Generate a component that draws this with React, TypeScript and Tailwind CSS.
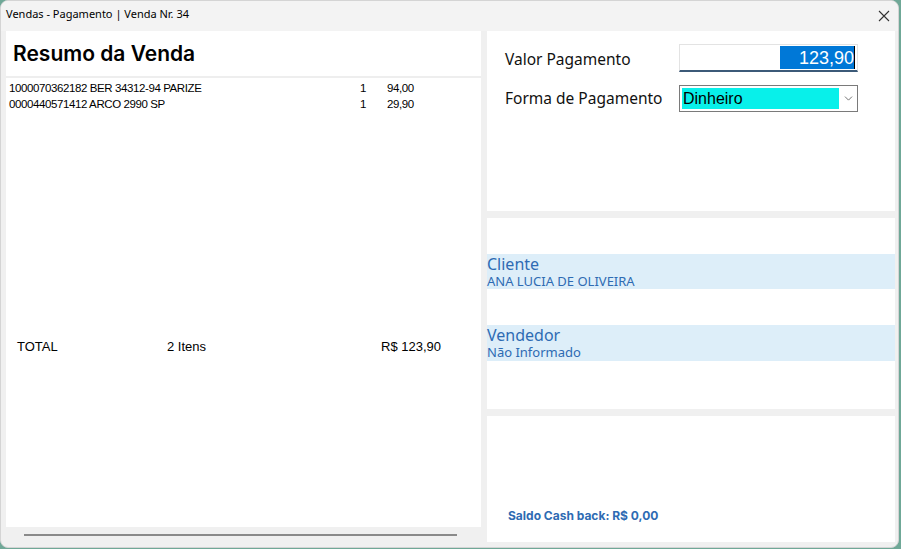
import { ChevronDown } from "lucide-react";

const items = [
  { desc: "1000070362182 BER 34312-94 PARIZE", qty: "1", price: "94,00" },
  { desc: "0000440571412 ARCO 2990 SP", qty: "1", price: "29,90" },
];

const ui = { fontFamily: '"Noto Sans", "Open Sans", sans-serif' };
const arial = { fontFamily: '"Liberation Sans", Arial, sans-serif' };

export default function App() {
  return (
    <div className="w-[901px] h-[549px] bg-[#6fa897] overflow-hidden">
      <div className="w-[899px] h-[548px] rounded-lg bg-[#f0f0f0] border border-[#d4d4d4] flex flex-col overflow-hidden">
        {/* Title bar */}
        <div className="h-[30px] shrink-0 flex items-center justify-between pl-[5px] pr-[8px] pb-[3px] bg-[#f3f3f3]" style={ui}>
          <span className="text-[11px] text-black">Vendas - Pagamento | Venda Nr. 34</span>
          <svg width="12" height="12" viewBox="0 0 12 12" className="text-[#333] mt-[2px]">
            <path d="M1 1 L11 11 M11 1 L1 11" stroke="currentColor" strokeWidth="1.1" />
          </svg>
        </div>

        <div className="flex flex-1 pl-[5px] gap-[6px] pb-[5px]">
          {/* Left: resumo */}
          <div className="w-[475px] flex flex-col">
            <div className="flex-1 bg-white flex flex-col">
              <div className="h-[47px] border-b-2 border-[#eeeeee] flex items-center pl-[7px]">
                <h1 className="text-[21px] font-semibold text-black" style={{ fontFamily: '"Inter", "Liberation Sans", sans-serif' }}>
                  Resumo da Venda
                </h1>
              </div>
              <div className="pt-[3px] pl-[3px] text-[11.5px] tracking-[-0.4px] text-black" style={arial}>
                {items.map((it) => (
                  <div key={it.desc} className="h-[16px] flex items-center">
                    <span className="w-[351px]">{it.desc}</span>
                    <span className="w-[27px]">{it.qty}</span>
                    <span>{it.price}</span>
                  </div>
                ))}
              </div>
              <div className="mt-[226px] pl-[11px] h-[16px] flex items-center text-[13px] text-black" style={arial}>
                <span className="w-[150px]">TOTAL</span>
                <span className="w-[214px]">2 Itens</span>
                <span>R$ 123,90</span>
              </div>
            </div>
            <div className="h-[15px] flex items-center pl-[18px]">
              <div className="w-[433px] h-[2px] bg-[#8a8a8a]" />
            </div>
          </div>

          {/* Right column */}
          <div className="w-[408px] flex flex-col gap-[7px]">
            <div className="h-[180px] bg-white pt-[13px] pl-[18px]">
              <div className="flex items-center h-[28px]">
                <span className="w-[174px] pt-[4px] text-[15.5px] text-[#111]" style={ui}>Valor Pagamento</span>
                <div className="w-[179px] h-[28px] border border-[#e3e3e3] border-b-2 border-b-[#3c5a78] bg-white flex items-center justify-end pr-[2px]">
                  <div className="w-[75px] h-[23px] bg-[#0078d7] flex items-center justify-end border-r border-black">
                    <span className="text-[18px] text-white leading-none" style={arial}>123,90</span>
                  </div>
                </div>
              </div>
              <div className="flex items-center h-[27px] mt-[13px]">
                <span className="w-[174px] text-[15.5px] text-[#111]" style={ui}>Forma de Pagamento</span>
                <div className="w-[179px] h-[27px] border border-[#7a7a7a] bg-white flex items-center pl-[2px]">
                  <div className="w-[157px] h-[21px] bg-[#08f0ea] flex items-center pl-[1px]">
                    <span className="text-[16px] text-black leading-none" style={arial}>Dinheiro</span>
                  </div>
                  <ChevronDown className="ml-[3px] w-[13px] h-[13px] text-[#555]" strokeWidth={1.5} />
                </div>
              </div>
            </div>

            <div className="h-[191px] bg-white pt-[36px] text-[#2e6bb3]" style={ui}>
              <div className="h-[35px] bg-[#ddeef9] flex flex-col justify-center">
                <span className="text-[16px] leading-[18px]">Cliente</span>
                <span className="text-[13px] leading-[16px]">ANA LUCIA DE OLIVEIRA</span>
              </div>
              <div className="h-[36px] mt-[36px] bg-[#ddeef9] flex flex-col justify-center">
                <span className="text-[16px] leading-[18px]">Vendedor</span>
                <span className="text-[13px] leading-[16px]">Não Informado</span>
              </div>
            </div>

            <div className="flex-1 bg-white flex items-end pl-[21px] pb-[17px]">
              <span className="text-[12px] font-bold text-[#2e6bb3]" style={{ fontFamily: '"Inter", "Noto Sans", sans-serif' }}>
                Saldo Cash back: R$ 0,00
              </span>
            </div>
          </div>
        </div>
      </div>
    </div>
  );
}
